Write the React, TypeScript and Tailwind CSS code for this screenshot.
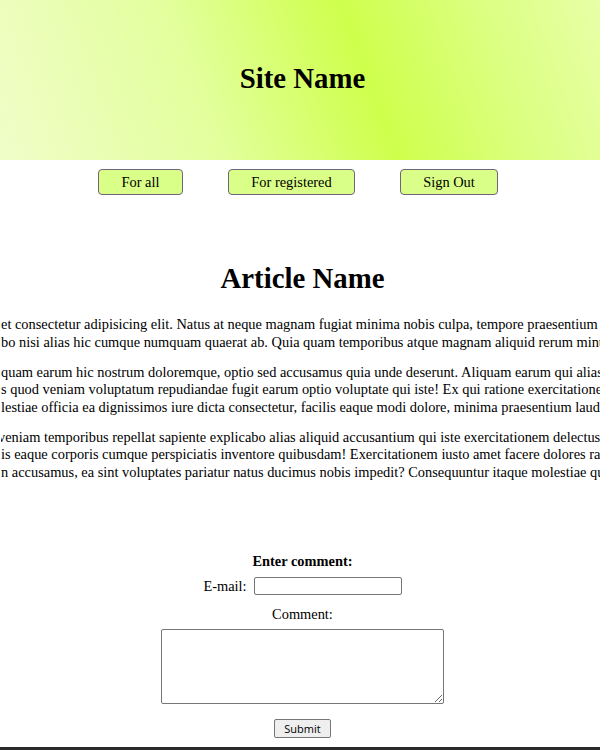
const serif = 'font-["Liberation_Serif","Times_New_Roman",serif]'

const PARAGRAPHS: string[][] = [
  [
    'et consectetur adipisicing elit. Natus at neque magnam fugiat minima nobis culpa, tempore praesentium quos',
    'bo nisi alias hic cumque numquam quaerat ab. Quia quam temporibus atque magnam aliquid rerum minus',
  ],
  [
    'quam earum hic nostrum doloremque, optio sed accusamus quia unde deserunt. Aliquam earum qui alias',
    's quod veniam voluptatum repudiandae fugit earum optio voluptate qui iste! Ex qui ratione exercitationem',
    'lestiae officia ea dignissimos iure dicta consectetur, facilis eaque modi dolore, minima praesentium laudantium',
  ],
  [
    'veniam temporibus repellat sapiente explicabo alias aliquid accusantium qui iste exercitationem delectus',
    'is eaque corporis cumque perspiciatis inventore quibusdam! Exercitationem iusto amet facere dolores ratione',
    'n accusamus, ea sint voluptates pariatur natus ducimus nobis impedit? Consequuntur itaque molestiae quas',
  ],
]

const NAV = [
  { label: 'For all', width: 'w-[85px]' },
  { label: 'For registered', width: 'w-[127px]' },
  { label: 'Sign Out', width: 'w-[98px]' },
]

export default function App() {
  return (
    <div className={`w-full overflow-hidden bg-white text-black ${serif}`}>
      <div className="w-[605px]">
        <header className="h-[160px] flex items-center justify-center bg-[linear-gradient(70deg,#f0fdc8_0%,#e2ff9c_34%,#cfff4c_60%,#dcff84_82%,#e8ffa8_100%)]">
          <h1 className="text-[28.8px] font-bold leading-[32px] -mt-[4px]">Site Name</h1>
        </header>

        <nav className="flex justify-center gap-[45px] mt-[9px] pr-[9px]">
          {NAV.map(item => (
            <button
              key={item.label}
              className={`${item.width} h-[26px] text-[14.4px] leading-[16px] bg-[#daff88] border border-[#6f6478] rounded-[4px]`}
            >
              {item.label}
            </button>
          ))}
        </nav>

        <h2 className="text-center text-[28.8px] font-bold leading-[32px] mt-[67px]">Article Name</h2>

        <div className="mt-[22px] flex flex-col gap-[12.5px] text-[14.4px] leading-[17.5px] pl-[1px]">
          {PARAGRAPHS.map((lines, i) => (
            <p key={i} className="w-[600px] overflow-hidden">
              {lines.map((line, j) => (
                <span key={j} className={`block whitespace-nowrap ${i === 2 && j === 0 ? '-ml-[3px]' : ''}`}>
                  {line}
                </span>
              ))}
            </p>
          ))}
        </div>

        <form className="flex flex-col items-center mt-[72px] text-[14.4px]">
          <h3 className="font-bold leading-[16px]">Enter comment:</h3>
          <label className="flex items-center gap-[7px] mt-[8px] leading-[16px]">
            E-mail:
            <input type="text" className="w-[148px] h-[18px] border border-[#767676] rounded-[2px] bg-white" />
          </label>
          <span className="mt-[11px] leading-[16px]">Comment:</span>
          <textarea className="mt-[7px] w-[283px] h-[75px] border border-[#767676] rounded-[2px] bg-white resize" />
          <button
            type="button"
            className='mt-[15px] w-[57px] h-[19px] border border-[#767676] rounded-[2px] bg-[#efefef] text-[11px] leading-[13px] font-["Open_Sans",sans-serif]'
          >
            Submit
          </button>
        </form>

        <footer className="mt-[9px] h-[40px] bg-[#2a2a2a]" />
      </div>
    </div>
  )
}
